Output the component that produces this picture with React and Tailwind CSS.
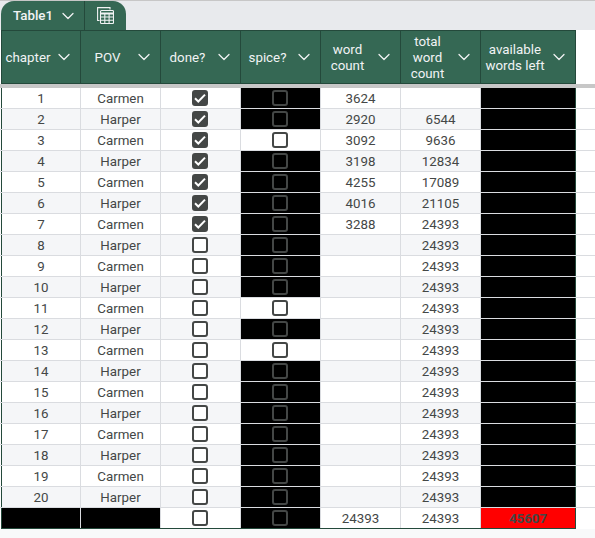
import { ChevronDown } from 'lucide-react';

const rows = [
  [1, 'Carmen', true, true, '3624', ''],
  [2, 'Harper', true, true, '2920', '6544'],
  [3, 'Carmen', true, false, '3092', '9636'],
  [4, 'Harper', true, true, '3198', '12834'],
  [5, 'Carmen', true, true, '4255', '17089'],
  [6, 'Harper', true, true, '4016', '21105'],
  [7, 'Carmen', true, true, '3288', '24393'],
  [8, 'Harper', false, true, '', '24393'],
  [9, 'Carmen', false, true, '', '24393'],
  [10, 'Harper', false, true, '', '24393'],
  [11, 'Carmen', false, false, '', '24393'],
  [12, 'Harper', false, true, '', '24393'],
  [13, 'Carmen', false, false, '', '24393'],
  [14, 'Harper', false, true, '', '24393'],
  [15, 'Carmen', false, true, '', '24393'],
  [16, 'Harper', false, true, '', '24393'],
  [17, 'Carmen', false, true, '', '24393'],
  [18, 'Harper', false, true, '', '24393'],
  [19, 'Carmen', false, true, '', '24393'],
  [20, 'Harper', false, true, '', '24393'],
];

const headers = [
  { label: ['chapter'], w: 'w-[79px]' },
  { label: ['POV'], w: 'w-[80px]' },
  { label: ['done?'], w: 'w-[80px]' },
  { label: ['spice?'], w: 'w-[80px]' },
  { label: ['word', 'count'], w: 'w-[80px]' },
  { label: ['total', 'word', 'count'], w: 'w-[80px]' },
  { label: ['available', 'words left'], w: 'w-[95px]' },
];

function Box({ checked, dark }) {
  return (
    <span
      className={`mr-[1px] flex h-[16px] w-[16px] items-center justify-center rounded-[3px] border-2 border-[#444746] ${
        checked ? 'bg-[#444746]' : dark ? 'bg-black' : 'bg-white'
      }`}
    >
      {checked && (
        <svg viewBox="0 0 12 12" className="h-[12px] w-[12px]" fill="none">
          <path d="M1 6.3 4.3 9.5 11 2.6" stroke="#fff" strokeWidth="2" />
        </svg>
      )}
    </span>
  );
}

function Cell({ children, className = '', w = 'w-[80px]', border = 'border-r border-r-[#dadce0]' }) {
  return (
    <div className={`flex h-full ${w} shrink-0 items-center justify-center ${border} ${className}`}>
      {children}
    </div>
  );
}

// the text sits a pixel below the middle of the row
function Txt({ children }) {
  return <span className="pt-[2px]">{children}</span>;
}

export default function App() {
  return (
    <div className="h-[538px] w-[595px] overflow-hidden bg-white font-['Roboto',sans-serif] text-[13.33px] text-[#444746]">
      {/* sheet tabs */}
      <div className="flex h-[30px] items-end border-t border-t-[#c7c7c7] bg-[#e8eaed] pl-[1px]">
        <div className="flex h-[29px] overflow-hidden rounded-t-[13px] bg-[#356854] text-[#f1f3f4]">
          <div className="flex w-[84px] items-center border-r border-r-[#24493b] pl-[12px] font-medium">
            Table1
            <ChevronDown className="ml-[5px]" size={20} strokeWidth={1.5} />
          </div>
          <div className="flex w-[41px] items-center justify-center pr-[1px]">
            <svg viewBox="0 0 17 17" className="h-[17px] w-[17px]" fill="none" stroke="#f1f3f4" strokeWidth="1.1">
              <path d="M2.5 13.5H.6V.6H13V2.5" />
              <rect x="3.5" y="3.5" width="13" height="13" rx="1" />
              <path d="M3.5 6.6H16.5" strokeWidth="2" />
              <path d="M3.5 10H16.5M3.5 13.3H16.5M7.8 7V16.5M12.1 7V16.5" />
            </svg>
          </div>
        </div>
      </div>

      {/* header */}
      <div className="flex h-[54px] pl-[1px]">
        <div className="flex border-y border-l border-y-[#24493b] border-l-[#24493b] bg-[#356854] text-[#f1f3f4]">
          {headers.map((h) => (
            <div
              key={h.label[0]}
              className={`relative flex h-full shrink-0 items-center justify-center border-r border-r-[#24493b] pr-[26px] ${h.w}`}
            >
              <div className="pt-[2px] text-center leading-[16px]">
                {h.label.map((t) => (
                  <div key={t}>{t}</div>
                ))}
              </div>
              <ChevronDown className="absolute right-[6px] top-1/2 -translate-y-1/2" size={20} strokeWidth={1.5} />
            </div>
          ))}
        </div>
      </div>

      <div className="h-[4px] bg-[#c7c7c7]" />

      {/* rows */}
      <div>
        {rows.map((r, i) => (
          <div key={r[0]} className="flex h-[21px] border-b border-b-[#dadce0] pl-[1px]">
            <div className={`flex h-full border-l border-l-[#24493b] ${i % 2 ? 'bg-[#f5f6f8]' : 'bg-white'}`}>
              <Cell w="w-[79px]"><Txt>{r[0]}</Txt></Cell>
              <Cell><Txt>{r[1]}</Txt></Cell>
              <Cell>
                <Box checked={r[2]} />
              </Cell>
              <Cell className={r[3] ? 'bg-black' : 'bg-white'}>
                <Box dark={r[3]} />
              </Cell>
              <Cell><Txt>{r[4]}</Txt></Cell>
              <Cell><Txt>{r[5]}</Txt></Cell>
              <Cell w="w-[95px]" className="bg-black" border="border-r border-r-[#24493b]" />
            </div>
          </div>
        ))}

        {/* totals row */}
        <div className="flex h-[21px] pl-[1px]">
          <div className="flex h-[21px] border-b border-l border-b-[#24493b] border-l-[#24493b] bg-white">
            <Cell w="w-[79px]" className="bg-black" />
            <Cell className="bg-black" />
            <Cell>
              <Box />
            </Cell>
            <Cell className="bg-black">
              <Box dark />
            </Cell>
            <Cell><Txt>24393</Txt></Cell>
            <Cell><Txt>24393</Txt></Cell>
            <Cell w="w-[95px]" className="bg-[#ff0000] font-bold" border="border-r border-r-[#24493b]">
              <Txt>45607</Txt>
            </Cell>
          </div>
        </div>
      </div>

      <div className="h-[10px] bg-[#f8f9fa]" />
    </div>
  );
}
